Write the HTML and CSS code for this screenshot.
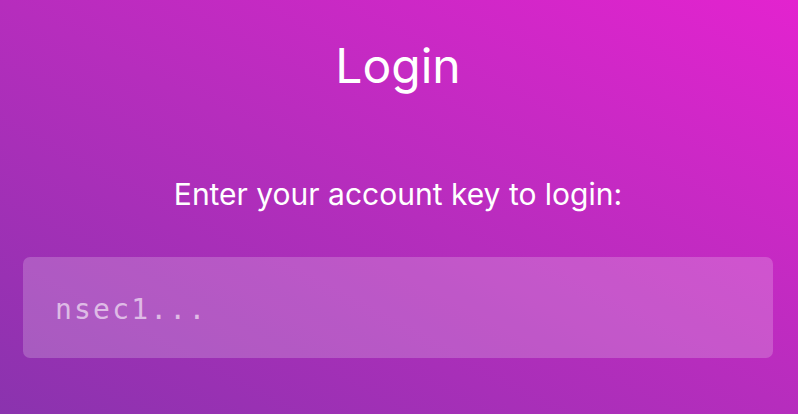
FILE: index.html
```html
<!DOCTYPE html>
<html lang="en">
<head>
    <meta charset="UTF-8">
    <meta name="viewport" content="width=device-width, initial-scale=1.0">
    <title>Login</title>
<link rel="stylesheet" href="styles.css">
</head>
<body>
<div class="page">
    <h1 class="title">Login</h1>
    <p class="hint">Enter your account key to login:</p>
    <input class="key" type="text" placeholder="nsec1...">
</div>
</body>
</html>
```

FILE: styles.css
```css
*{
	padding:0;
	margin:0;
	box-sizing:border-box;
	}
html,body{
	height:100%;
	}
body{
	background:linear-gradient(to top right, #8a33ae 0%, #b62dbd 50%, #e323cf 100%);
	font-family:Inter, "Noto Sans", sans-serif;
	color:#fff;
	}
.page{
	display:flex;
	flex-direction:column;
	align-items:center;
	padding:34px 25px 0 23px;
	}
.title{
	font-size:48px;
	font-weight:400;
	line-height:64px;
	}
.hint{
	margin-top:78px;
	font-size:30px;
	line-height:36px;
	}
.key{
	margin-top:45px;
	width:100%;
	height:101px;
	border:none;
	outline:none;
	border-radius:7px;
	background:rgba(255,255,255,0.2);
	padding:4px 32px 0;
	font-family:"DejaVu Sans Mono", monospace;
	font-size:28px;
	letter-spacing:2.2px;
	color:#fff;
	}
.key::placeholder{
	color:rgba(255,255,255,0.6);
	}
```
